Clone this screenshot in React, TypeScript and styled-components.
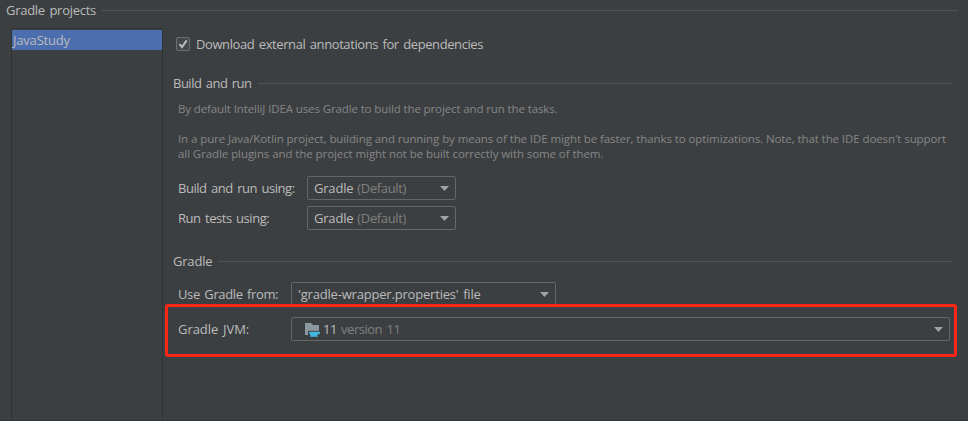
import React from "react";
import styled, { createGlobalStyle } from "styled-components";

const Global = createGlobalStyle`
  * { box-sizing: border-box; }
  body { margin: 0; background: #3c3f41; }
`;

const Page = styled.main`
  position: relative;
  width: 968px;
  height: 421px;
  overflow: hidden;
  background: #3c3f41;
  border-bottom: 1px solid #343638;
  color: #bbbbbb;
  font: 13px/20px "Open Sans", "Noto Sans", sans-serif;
`;

const Heading = styled.h2<{ $top?: number }>`
  display: flex;
  align-items: center;
  gap: 6px;
  height: 20px;
  margin: ${(p) => p.$top || 0}px 0 0;
  font: inherit;
  &::after {
    content: "";
    flex: 1;
    height: 1px;
    margin-top: 1px;
    background: #515355;
  }
`;

const Top = styled.header`
  padding: 0 10px 0 6px;
`;

const Columns = styled.div`
  display: flex;
  height: 393px;
  margin: 8px 0 0 11px;
`;

const ProjectList = styled.nav`
  width: 152px;
  border: 1px solid #303234;
  border-bottom: 0;
  padding-top: 1px;
`;

const Project = styled.div`
  height: 20px;
  padding-left: 1px;
  line-height: 21px;
  background: #4b6eaf;
`;

const Settings = styled.section`
  display: flex;
  flex-direction: column;
  width: 780px;
  margin-left: 10px;
`;

const CheckRow = styled.label`
  display: flex;
  align-items: center;
  gap: 6px;
  height: 20px;
  margin: 6px 0 19px 3px;
`;

const Box = styled.svg`
  width: 14px;
  height: 14px;
  display: block;
`;

const Hint = styled.p<{ $space?: number }>`
  margin: ${(p) => p.$space || 0}px 0 0 5px;
  white-space: nowrap;
  color: #868686;
  font-size: 11.5px;
  line-height: 15px;
`;

const HintLine = styled.span<{ $tracking: number }>`
  display: block;
  letter-spacing: ${(p) => p.$tracking}px;
`;

const Field = styled.div<{ $label: number; $top: number }>`
  display: grid;
  grid-template-columns: ${(p) => p.$label}px auto;
  justify-content: start;
  align-items: center;
  height: 24px;
  margin: ${(p) => p.$top}px 0 0 5px;
`;

const Select = styled.div<{ $width: number; $indent?: number }>`
  display: flex;
  align-items: center;
  gap: 4px;
  width: ${(p) => p.$width}px;
  height: 24px;
  padding: 0 6px 0 ${(p) => p.$indent || 6}px;
  border: 1px solid #646668;
  border-radius: 2px;
  white-space: nowrap;
`;

const Arrow = styled.svg`
  width: 9px;
  height: 5px;
  margin-left: auto;
`;

const Folder = styled.svg`
  width: 16px;
  height: 16px;
  margin-right: -1px;
`;

const Text = styled.span<{ $tracking?: number }>`
  letter-spacing: ${(p) => p.$tracking || 0}px;
  word-spacing: 1.5px;
  white-space: nowrap;
`;

const Muted = styled(Text)`
  color: #808080;
`;

const Highlight = styled.div`
  position: absolute;
  left: 165px;
  top: 304px;
  width: 792px;
  height: 53px;
  border: 3px solid #ff2517;
  border-radius: 3px;
`;

const Caret = () => (
  <Arrow viewBox="0 0 9 5">
    <path d="M0 0h9L4.5 5z" fill="#a0a3a5" />
  </Arrow>
);

const DefaultRunner = () => (
  <Select $width={149}>
    <Text $tracking={-0.2}>Gradle</Text>
    <Muted $tracking={-0.35}>(Default)</Muted>
    <Caret />
  </Select>
);

export default function App() {
  return (
    <Page>
      <Global />
      <Top>
        <Heading><Text $tracking={-0.28}>Gradle projects</Text></Heading>
      </Top>
      <Columns>
        <ProjectList>
          <Project><Text $tracking={-0.2}>JavaStudy</Text></Project>
        </ProjectList>
        <Settings>
          <CheckRow>
            <Box viewBox="0 0 14 14">
              <rect x=".5" y=".5" width="13" height="13" rx="1.5" fill="#43494a" stroke="#6b6e70" />
              <path d="M3.5 7.2 6 10.1 10.7 3.4" fill="none" stroke="#bbbbbb" strokeWidth="2" />
            </Box>
            <Text $tracking={-0.41}>Download external annotations for dependencies</Text>
          </CheckRow>
          <Heading><Text $tracking={-0.5}>Build and run</Text></Heading>
          <Hint $space={8}>
            <HintLine $tracking={-0.12}>By default IntelliJ IDEA uses Gradle to build the project and run the tasks.</HintLine>
          </Hint>
          <Hint $space={15}>
            <HintLine $tracking={-0.09}>In a pure Java/Kotlin project, building and running by means of the IDE might be faster, thanks to optimizations. Note, that the IDE doesn't support</HintLine>
            <HintLine $tracking={-0.08}>all Gradle plugins and the project might not be built correctly with some of them.</HintLine>
          </Hint>
          <Field $label={129} $top={15}>
            <Text $tracking={-0.46}>Build and run using:</Text>
            <DefaultRunner />
          </Field>
          <Field $label={129} $top={6}>
            <Text $tracking={-0.46}>Run tests using:</Text>
            <DefaultRunner />
          </Field>
          <Heading $top={21}><Text $tracking={-0.2}>Gradle</Text></Heading>
          <Field $label={113} $top={11}>
            <Text $tracking={-0.38}>Use Gradle from:</Text>
            <Select $width={265}><Text $tracking={-0.19}>'gradle-wrapper.properties' file</Text><Caret /></Select>
          </Field>
          <Field $label={113} $top={11}>
            <Text $tracking={-0.05}>Gradle JVM:</Text>
            <Select $width={659} $indent={12}>
              <Folder viewBox="0 0 16 16">
                <path d="M1 2h6l2 2h6v10H1z" fill="#8b989f" />
                <path d="M4 9.8h12v5H4z" fill="#3c3f41" />
                <path d="M1 9h3v5H1z" fill="#8b989f" />
                <path d="M5 10.7h11v1.2q0 1.3-2.2 1.5-.4 1-1.2 1.4H14v.9H6v-.9h1Q5 13.6 5 10.7z" fill="#40b6e0" />
              </Folder>
              <Text $tracking={-0.4}>11</Text>
              <Muted $tracking={-0.48}>version 11</Muted>
              <Caret />
            </Select>
          </Field>
        </Settings>
      </Columns>
      <Highlight />
    </Page>
  );
}
